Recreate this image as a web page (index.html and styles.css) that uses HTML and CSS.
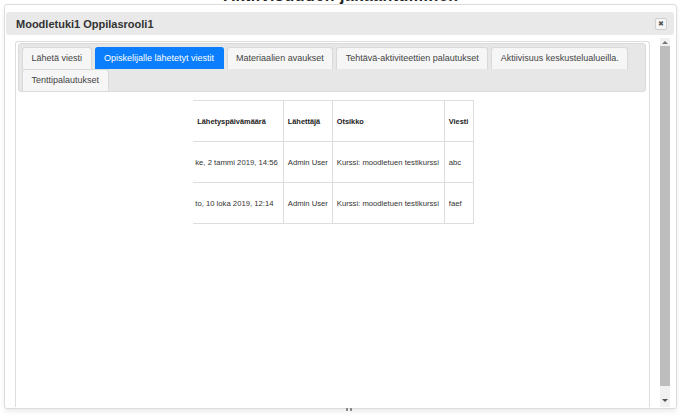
FILE: index.html
```html
<!DOCTYPE html>
<html lang="fi">
<head>
  <meta charset="UTF-8">
  <title>Moodletuki1 Oppilasrooli1</title>
  <link rel="stylesheet" href="styles.css">
</head>
<body>

  <div class="page">
    <h1 class="page-title">Aktiivisuuden jakaantuminen</h1>
  </div>

  <div class="dialog">
    <div class="titlebar">
      <span class="title">Moodletuki1 Oppilasrooli1</span>
      <button class="close-btn">&#10006;</button>
    </div>

    <div class="content">
      <div class="frame">
        <div class="nav">
          <a class="tab" href="#">Lähetä viesti</a>
          <a class="tab active" href="#">Opiskelijalle lähetetyt viestit</a>
          <a class="tab" href="#">Materiaalien avaukset</a>
          <a class="tab" href="#">Tehtävä-aktiviteettien palautukset</a>
          <a class="tab" href="#">Aktiivisuus keskustelualueilla.</a>
          <a class="tab" href="#">Tenttipalautukset</a>
        </div>

        <table class="messages">
          <colgroup>
            <col class="c-date">
            <col class="c-from">
            <col class="c-subject">
            <col class="c-msg">
          </colgroup>
          <tr>
            <th>Lähetyspäivämäärä</th>
            <th>Lähettäjä</th>
            <th>Otsikko</th>
            <th>Viesti</th>
          </tr>
          <tr>
            <td>ke, 2 tammi 2019, 14:56</td>
            <td>Admin User</td>
            <td>Kurssi: moodletuen testikurssi</td>
            <td>abc</td>
          </tr>
          <tr>
            <td>to, 10 loka 2019, 12:14</td>
            <td>Admin User</td>
            <td>Kurssi: moodletuen testikurssi</td>
            <td>faef</td>
          </tr>
        </table>
      </div>

      <div class="scrollbar">
        <span class="arrow up"></span>
        <div class="thumb"></div>
        <span class="arrow down"></span>
      </div>
    </div>

    <span class="grip"></span>
  </div>

</body>
</html>
```

FILE: styles.css
```css
/* Reset */
body, html {
  margin: 0;
  padding: 0;
}

body {
  width: 682px;
  height: 416px;
  overflow: hidden;
  position: relative;
  background: #fff;
  font-family: "Liberation Sans", Arial, sans-serif;
  color: #333;
}

/* Page behind the dialog */
.page {
  text-align: center;
}

.page-title {
  margin: -13px 0 0;
  font-size: 16px;
  line-height: 18px;
  color: #222;
  letter-spacing: 0.5px;
}

/* Dialog */
.dialog {
  position: absolute;
  left: 4px;
  top: 4px;
  width: 673px;
  height: 405px;
  box-sizing: border-box;
  border: 1px solid #dcdcdc;
  border-radius: 3px;
  background: #fff;
  padding: 7px 2px 1px 1px;
  display: flex;
  flex-direction: column;
  box-shadow: 0 3px 5px rgba(0, 0, 0, 0.07);
}

.titlebar {
  height: 23px;
  flex: none;
  background: #e9e9e9;
  border-radius: 3px;
  display: flex;
  align-items: center;
  justify-content: space-between;
  padding: 0 7px 0 10px;
}

.title {
  font-size: 11px;
  font-weight: bold;
  color: #333;
}

.close-btn {
  width: 12px;
  height: 12px;
  padding: 0;
  border: 1px solid #cfcfcf;
  border-radius: 2px;
  background: #f6f6f6;
  color: #555;
  font-size: 7px;
  line-height: 10px;
  text-align: center;
  cursor: pointer;
}

/* Dialog body */
.content {
  flex: 1;
  display: flex;
  margin: 3px 0 0 8px;
  overflow: hidden;
}

.frame {
  flex: 1;
  margin: 3px 0 0 1px;
  border: 1px solid #dddddd;
  border-bottom: none;
  border-radius: 3px 3px 0 0;
  height: 400px;
}

/* Tabs */
.nav {
  margin: 1px 3px 0 2px;
  padding: 3px 0 0 3px;
  background: #e7e7e7;
  border: 1px solid #dadada;
  border-radius: 3px;
  display: flex;
  flex-wrap: wrap;
  column-gap: 3px;
}

.tab {
  height: 22px;
  box-sizing: border-box;
  padding: 0 8.5px;
  border: 1px solid #d9d9d9;
  border-bottom: none;
  border-radius: 3px 3px 0 0;
  background: #f6f6f6;
  color: #444;
  font-size: 9px;
  line-height: 21px;
  text-decoration: none;
  white-space: nowrap;
}

.tab.active {
  background: #0a7efc;
  border-color: #0a7efc;
  color: #fff;
}

/* Table */
.messages {
  margin: 8px auto 0;
  border-collapse: collapse;
  table-layout: fixed;
  width: 280px;
  position: relative;
  left: 1px;
}

.c-date { width: 90px; }
.c-from { width: 49px; }
.c-subject { width: 112px; }
.c-msg { width: 29px; }

.messages th,
.messages td {
  border: 1px solid #dedede;
  height: 40px;
  padding: 0 4px;
  text-align: left;
  vertical-align: middle;
  white-space: nowrap;
  overflow: hidden;
}

.messages th {
  font-size: 7.4px;
  font-weight: bold;
  color: #222;
}

.messages td {
  font-size: 7.7px;
  color: #333;
}

.messages th:first-child,
.messages td:first-child {
  border-left: none;
}

.messages td:first-child {
  padding-left: 2px;
}

/* Fake scrollbar of the inner frame */
.scrollbar {
  width: 10px;
  margin: 0 4px 0 10px;
  background: #f1f1f1;
  display: flex;
  flex-direction: column;
  align-items: center;
}

.thumb {
  flex: 1;
  width: 10px;
  margin: 2px 0 13px;
  background: #bdbdbd;
}

.arrow {
  width: 0;
  height: 0;
  border-left: 3px solid transparent;
  border-right: 3px solid transparent;
}

.arrow.up {
  margin-top: 3px;
  border-bottom: 3px solid #777;
}

.arrow.down {
  margin-bottom: 5px;
  border-top: 3px solid #555;
}

/* Resize grip on the bottom edge */
.grip {
  position: absolute;
  left: 341px;
  bottom: -3px;
  width: 2px;
  height: 3px;
  background: #888;
  box-shadow: 4px 0 0 #888;
}
```
